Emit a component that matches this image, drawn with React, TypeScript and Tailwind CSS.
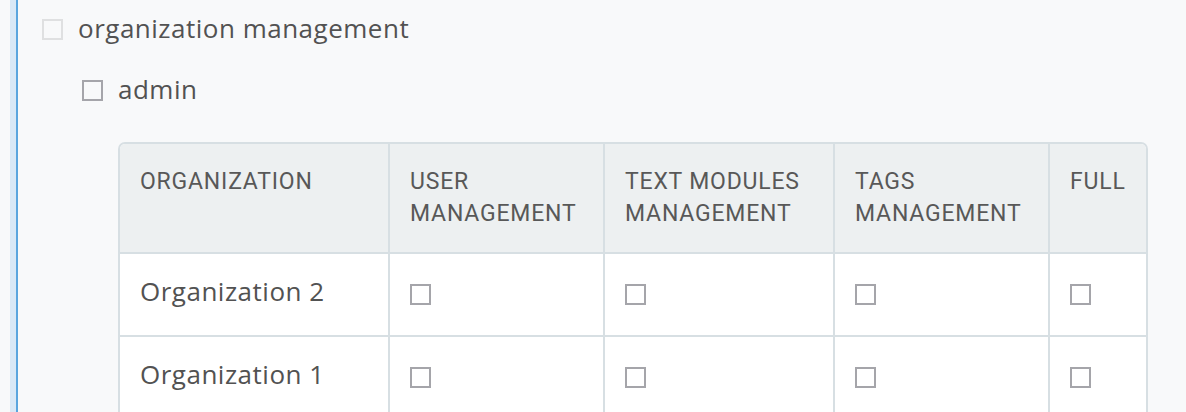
import React from "react";

const Box = ({ light = false }: { light?: boolean }) => (
  <span
    className={
      "inline-block w-[21px] h-[21px] shrink-0 border-2 " +
      (light ? "border-[#dfe0e1]" : "border-[#a5a5aa]")
    }
  />
);

const headers = [
  ["ORGANIZATION"],
  ["USER", "MANAGEMENT"],
  ["TEXT MODULES", "MANAGEMENT"],
  ["TAGS", "MANAGEMENT"],
  ["FULL"],
];

const rows = ["Organization 2", "Organization 1"];

const body = { fontFamily: "'Open Sans', Roboto, sans-serif" };
const head = { fontFamily: "Roboto, 'Open Sans', sans-serif" };

export default function App() {
  return (
    <div className="min-h-screen bg-[#f8f9fa] flex text-[#525252]" style={body}>
      <div className="w-[10px] shrink-0" />
      <div className="w-[6px] shrink-0 bg-[#d9e8f6]" />
      <div className="w-[2px] shrink-0 bg-[#5ba5de]" />
      <div className="flex-1 pl-[24px] pt-[19px]">
        <div className="flex items-center gap-[15px] h-[21px]">
          <Box light />
          <span className="text-[26px] leading-none tracking-[0.5px] -mt-[3px]">organization management</span>
        </div>
        <div className="pl-[40px] mt-[40px]">
          <div className="flex items-center gap-[15px] h-[21px]">
            <Box />
            <span className="text-[26px] leading-none tracking-[0.5px] -mt-[3px]">admin</span>
          </div>
          <div className="ml-[36px] mt-[41px] w-[1030px] border-2 border-[#d7dfe3] rounded-[7px] overflow-hidden bg-white">
            <table className="w-full table-fixed border-separate border-spacing-0">
              <colgroup>
                <col className="w-[268px]" />
                <col className="w-[215px]" />
                <col className="w-[230px]" />
                <col className="w-[215px]" />
                <col className="w-[98px]" />
              </colgroup>
              <thead>
                <tr className="bg-[#edf0f1]">
                  {headers.map((h, i) => (
                    <th
                      key={i}
                      style={head}
                      className={
                        "text-left align-top font-normal text-[23px] leading-[32px] tracking-[0.8px] pl-[20px] pr-2 pt-[22px] pb-[22px] text-[#585858] " +
                        (i > 0 ? "border-l-2 border-[#d7dfe3]" : "")
                      }
                    >
                      {h.map((l, j) => (
                        <div key={j}>{l}</div>
                      ))}
                    </th>
                  ))}
                </tr>
              </thead>
              <tbody>
                {rows.map((r) => (
                  <tr key={r}>
                    <td className="border-t-2 border-[#d7dfe3] h-[83px] pl-[20px] pb-[7px] text-[26px] tracking-[0.5px] align-middle">
                      {r}
                    </td>
                    {[0, 1, 2, 3].map((c) => (
                      <td
                        key={c}
                        className="border-t-2 border-l-2 border-[#d7dfe3] pl-[20px] align-middle"
                      >
                        <div className="flex items-center h-[21px]">
                          <Box />
                        </div>
                      </td>
                    ))}
                  </tr>
                ))}
              </tbody>
            </table>
          </div>
        </div>
      </div>
    </div>
  );
}
